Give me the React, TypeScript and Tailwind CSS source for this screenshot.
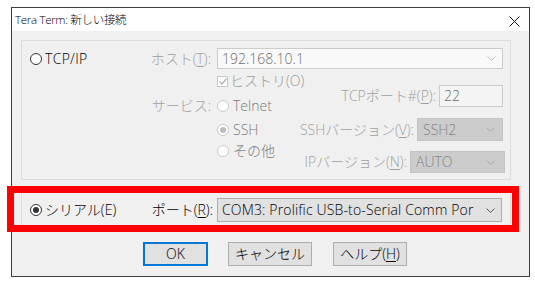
import React from 'react';

const FONT = "font-['Open_Sans','Noto_Sans_CJK_JP',sans-serif] font-light";

function Radio({ checked, disabled }: { checked?: boolean; disabled?: boolean }) {
  return (
    <span
      className={`w-[12px] h-[12px] rounded-full border flex items-center justify-center shrink-0 bg-white ${
        disabled ? 'border-[#c8c8c8]' : 'border-[#333333]'
      }`}
    >
      {checked && (
        <span className={`w-[6px] h-[6px] rounded-full ${disabled ? 'bg-[#bcbcbc]' : 'bg-[#333333]'}`} />
      )}
    </span>
  );
}

function Chevron({ color = '#a8a8a8' }: { color?: string }) {
  return (
    <svg width="9" height="5" viewBox="0 0 9 5" className="shrink-0">
      <polyline points="0.5,0.5 4.5,4.5 8.5,0.5" fill="none" stroke={color} strokeWidth="1" />
    </svg>
  );
}

const U = ({ c }: { c: string }) => <span className="underline underline-offset-2">{c}</span>;

export default function App() {
  return (
    <div className={`relative w-[535px] h-[283px] bg-white pt-[7px] pl-[11px] ${FONT}`}>
      {/* ── Window ─────────────────────────────────────────── */}
      <div className="w-[519px] h-[270px] border border-[#3c3c3c] flex flex-col">
        {/* title bar */}
        <div className="h-[23px] bg-white flex items-center justify-between pl-[3px] pr-[9px] shrink-0">
          <span className="text-[11.5px] tracking-[-0.3px] leading-none text-black">Tera Term: 新しい接続</span>
          <svg width="11" height="11" viewBox="0 0 11 11" className="mt-[4px]">
            <path d="M0.5 0.5 L10.5 10.5 M10.5 0.5 L0.5 10.5" stroke="#111" strokeWidth="1" />
          </svg>
        </div>

        {/* client */}
        <div className="flex-1 bg-[#f0f0f0] pl-[9px] pt-[9px] flex flex-col text-[14px] leading-none">
          {/* TCP/IP group */}
          <div className="w-[490px] h-[140px] border border-[#dcdcdc] flex flex-col">
            <div className="flex items-center h-[21px] mt-[7px] pl-[8px]">
              <div className="w-[118px] flex items-center gap-[3px]">
                <Radio />
                <span className="text-black tracking-[0.3px]">TCP/IP</span>
              </div>
              <span className="w-[63px] text-right text-[#a0a0a0] whitespace-nowrap">
                ホスト(<U c="T" />):
              </span>
              <div className="ml-[6px] w-[286px] h-[21px] border border-[#cccccc] bg-[#f9f9f9] flex items-center justify-between pl-[4px] pr-[6px]">
                <span className="text-[#6d6d6d]">192.168.10.1</span>
                <Chevron color="#c0c0c0" />
              </div>
            </div>

            <div className="flex pl-[8px]">
              <div className="w-[181px] flex flex-col">
                <div className="mt-[27px] h-[20px] flex items-center justify-end text-[#a0a0a0] whitespace-nowrap">
                  サービス:
                </div>
              </div>

              <div className="ml-[6px] w-[73px] flex flex-col text-[#7a7a7a] whitespace-nowrap">
                <div className="mt-[2px] h-[20px] flex items-center gap-[2px]">
                  <span className="w-[11px] h-[11px] border border-[#c8c8c8] bg-white flex items-center justify-center shrink-0">
                    <svg width="8" height="7" viewBox="0 0 8 7">
                      <polyline points="0.5,3.5 3,6 7.5,0.5" fill="none" stroke="#b0b0b0" strokeWidth="1.2" />
                    </svg>
                  </span>
                  <span className="text-[#9a9a9a]">ヒストリ(O)</span>
                </div>
                <div className="mt-[5px] h-[20px] flex items-center gap-[4px]">
                  <Radio disabled />
                  <span>Telnet</span>
                </div>
                <div className="mt-[4px] h-[20px] flex items-center gap-[4px]">
                  <Radio disabled checked />
                  <span>SSH</span>
                </div>
                <div className="mt-[1px] h-[20px] flex items-center gap-[4px]">
                  <Radio disabled />
                  <span>その他</span>
                </div>
              </div>

              <div className="w-[215px] flex flex-col items-end text-[#a0a0a0] whitespace-nowrap">
                <div className="mt-[16px] mr-[2px] h-[22px] flex items-center">
                  <span>
                    TCPポート#(<U c="P" />):
                  </span>
                  <div className="ml-[3px] w-[64px] h-[22px] border border-[#cccccc] bg-[#f4f4f4] flex items-center pl-[4px] text-[#6d6d6d]">
                    22
                  </div>
                </div>
                <div className="mt-[11px] mr-[2px] h-[23px] flex items-center">
                  <span>
                    SSHバージョン(<U c="V" />):
                  </span>
                  <div className="ml-[3px] w-[86px] h-[23px] border border-[#c4c4c4] bg-[#cccccc] flex items-center justify-between pl-[5px] pr-[7px] text-[#838383]">
                    <span>SSH2</span>
                    <Chevron color="#aaaaaa" />
                  </div>
                </div>
                <div className="mt-[10px] h-[22px] flex items-center">
                  <span>
                    IPバージョン(<U c="N" />):
                  </span>
                  <div className="ml-[3px] w-[95px] h-[22px] border border-[#c4c4c4] bg-[#cccccc] flex items-center justify-between pl-[5px] pr-[9px] text-[#838383]">
                    <span>AUTO</span>
                    <Chevron color="#aaaaaa" />
                  </div>
                </div>
              </div>
            </div>
          </div>

          {/* Serial group */}
          <div className="mt-[8px] w-[490px] h-[42px] border border-[#dcdcdc] flex items-center pl-[8px] pt-[2px]">
            <div className="w-[118px] flex items-center gap-[3px]">
              <Radio checked />
              <span className="text-black">シリアル(E)</span>
            </div>
            <span className="w-[65px] text-right text-black whitespace-nowrap">
              ポート(<U c="R" />):
            </span>
            <div className="ml-[4px] w-[285px] h-[24px] border border-[#adadad] bg-[#e1e1e1] flex items-center justify-between pl-[4px] pr-[6px] text-black whitespace-nowrap overflow-hidden">
              <span className="tracking-[0.15px]">COM3: Prolific USB-to-Serial Comm Por</span>
              <Chevron color="#555555" />
            </div>
          </div>

          {/* buttons */}
          <div className="mt-[12px] ml-[122px] flex items-center text-black">
            <button className="w-[65px] h-[24px] border-2 border-[#0078d7] bg-[#e1e1e1] flex items-center justify-center">
              OK
            </button>
            <button className="ml-[20px] w-[84px] h-[24px] border border-[#adadad] bg-[#e1e1e1] flex items-center justify-center">
              キャンセル
            </button>
            <button className="ml-[21px] w-[74px] h-[24px] border border-[#adadad] bg-[#e1e1e1] flex items-center justify-center">
              ヘルプ(<U c="H" />)
            </button>
          </div>
        </div>
      </div>

      {/* red highlight over the serial row */}
      <div className="absolute left-[7px] top-[186px] w-[512px] h-[46px] border-[7px] border-[#ff0000] pointer-events-none" />
    </div>
  );
}
